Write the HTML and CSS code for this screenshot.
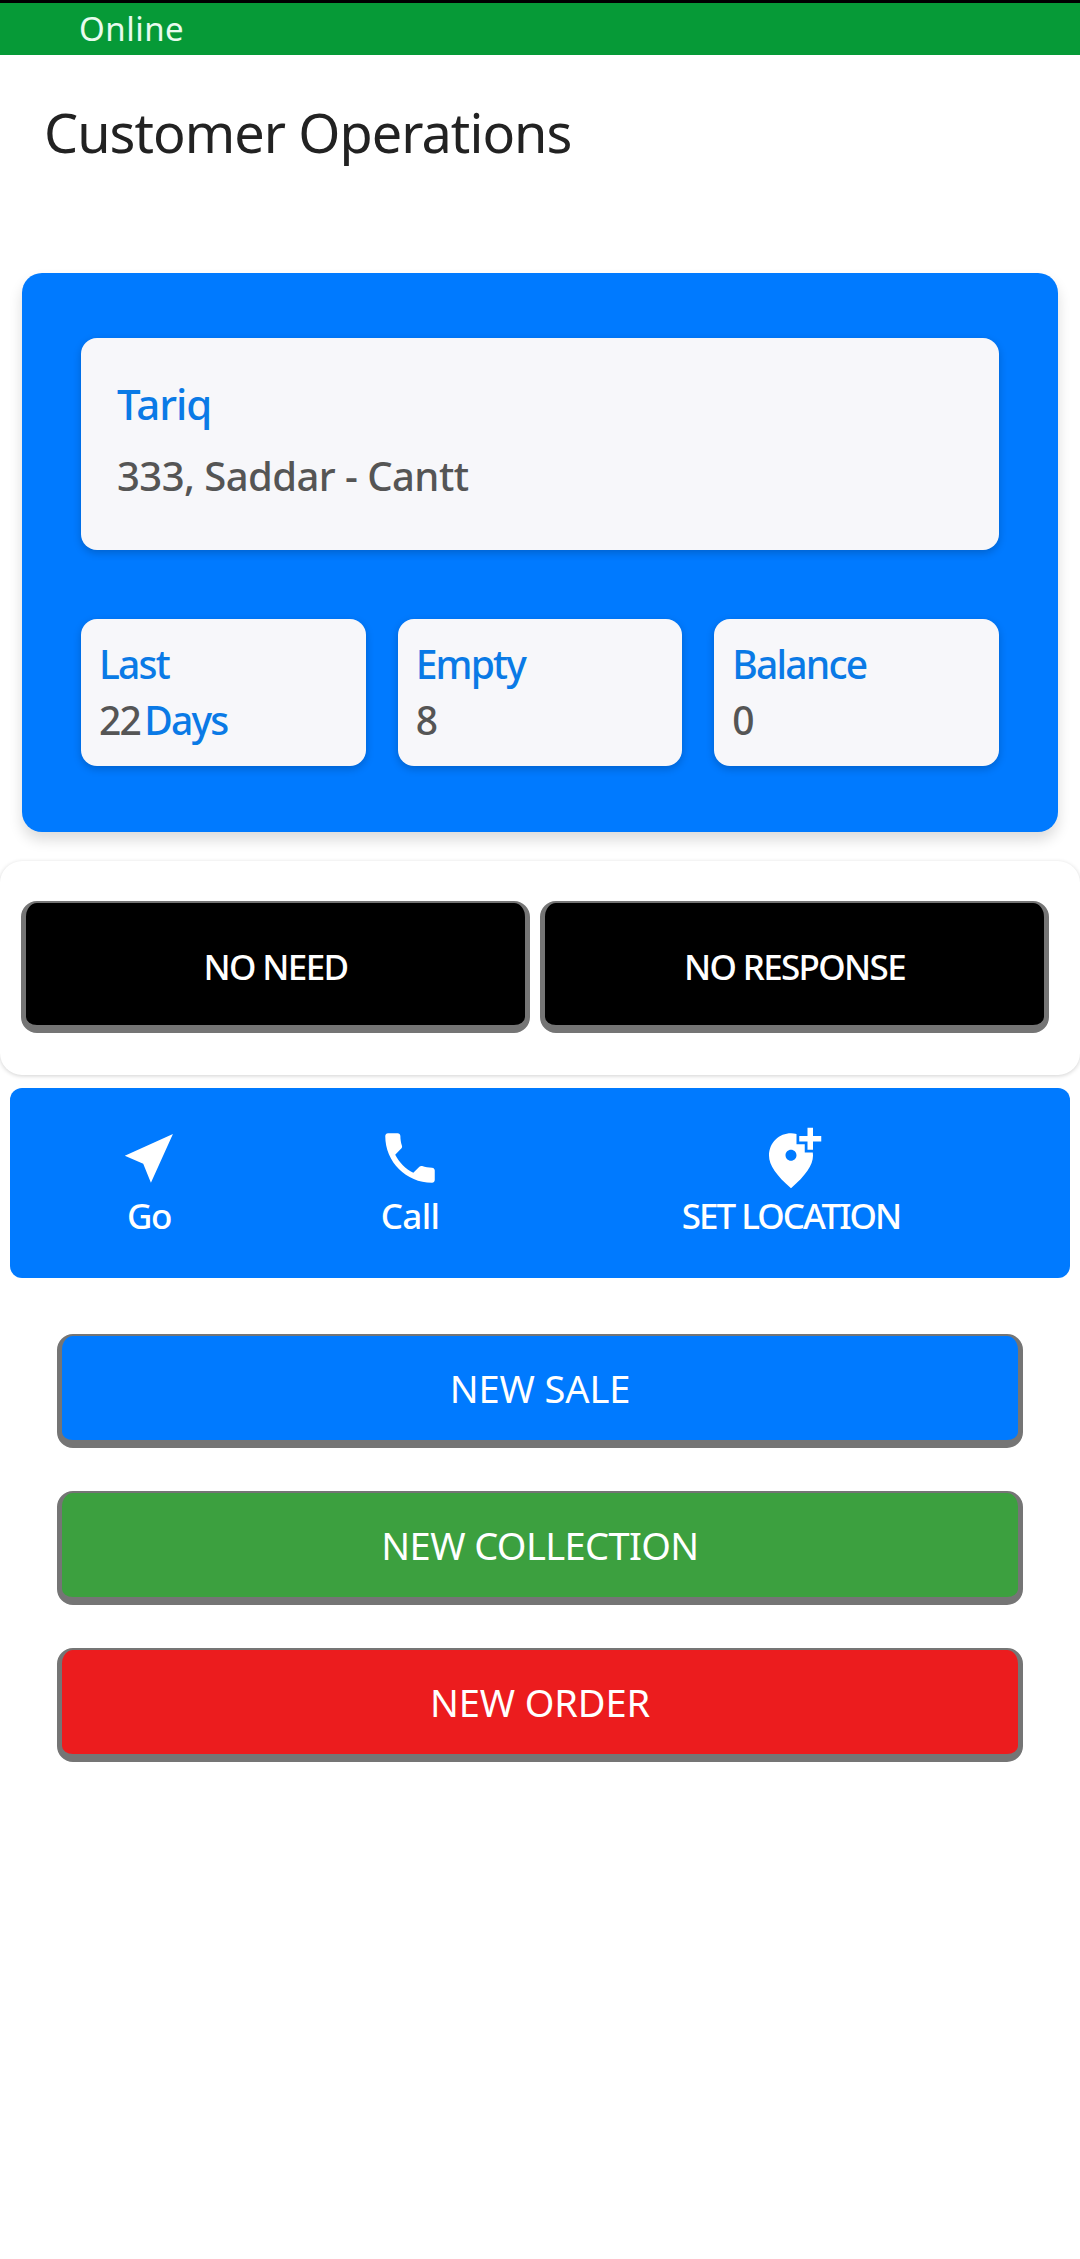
FILE: index.html
```html
<!DOCTYPE html>
<html lang="en">
<head>
<meta charset="utf-8">
<title>Customer Operations</title>
<link rel="stylesheet" href="styles.css">
</head>
<body>
<div class="status">Online</div>
<h1 class="title">Customer Operations</h1>
<section class="card">
  <div class="info">
    <div class="name">Tariq</div>
    <div class="addr">333, Saddar - Cantt</div>
  </div>
  <div class="stats">
    <div class="stat"><div class="lab">Last</div><div class="val">22 <span class="lab">Days</span></div></div>
    <div class="stat"><div class="lab">Empty</div><div class="val">8</div></div>
    <div class="stat"><div class="lab">Balance</div><div class="val">0</div></div>
  </div>
</section>
<section class="panel">
  <button class="dark">NO NEED</button>
  <button class="dark">NO RESPONSE</button>
</section>
<nav class="actions">
  <div class="act">
    <svg class="ico" viewBox="0 0 24 24"><path d="M20.7 3.3L3.2 11.2 9.9 14.1 12.7 21z"/></svg>
    <span>Go</span>
  </div>
  <div class="act">
    <svg class="ico" viewBox="0 0 24 24"><path d="M6.62 10.79c1.44 2.83 3.76 5.14 6.59 6.59l2.2-2.2c.27-.27.67-.36 1.02-.24 1.12.37 2.33.57 3.57.57.55 0 1 .45 1 1V20c0 .55-.45 1-1 1-9.39 0-17-7.61-17-17 0-.55.45-1 1-1h3.5c.55 0 1 .45 1 1 0 1.25.2 2.45.57 3.57.11.35.03.74-.25 1.02l-2.2 2.2z"/></svg>
    <span class="wordy">Call</span>
  </div>
  <div class="act">
    <svg class="ico" viewBox="0 0 24 24"><path d="M20 1v3h3v2h-3v3h-2V6h-3V4h3V1h2zm-8 12c1.1 0 2-.9 2-2 0-1.1-.9-2-2-2s-2 .9-2 2c0 1.1.9 2 2 2zm2-9.75V7h3v3h2.92c.05.39.08.79.08 1.2 0 3.32-2.67 7.25-8 11.8-5.33-4.55-8-8.48-8-11.8C4 6.22 7.8 3 12 3c.68 0 1.35.08 2 .25z"/></svg>
    <span class="caps">SET LOCATION</span>
  </div>
</nav>
<section class="big">
  <button class="wide blue">NEW SALE</button>
  <button class="wide green tight">NEW COLLECTION</button>
  <button class="wide red">NEW ORDER</button>
</section>
</body>
</html>
```
FILE: styles.css
```css
* { box-sizing: border-box; }
html, body { margin: 0; padding: 0; }
body { width: 1080px; height: 2259px; background: #fff; font-family: "Noto Sans", "Open Sans", sans-serif; overflow: hidden; }
button { font-family: inherit; display: block; margin: 0; }

.status { height: 55px; border-top: 3px solid #000; background: #069a37; color: #e8fbee; padding-left: 79px; font-size: 33px; line-height: 52px; letter-spacing: .5px; }
.title { margin: 0; height: 218px; padding: 39px 0 0 44px; font-size: 54px; line-height: 76px; font-weight: 400; color: #222; letter-spacing: -.95px; }

.card { margin: 0 22px; height: 559px; padding: 65px 59px 0; background: #007aff; border-radius: 20px; box-shadow: 0 8px 14px rgba(0,0,0,.14); }
.info { height: 212px; padding: 41px 36px 0; background: #f7f7fa; border-radius: 16px; box-shadow: 0 3px 8px rgba(0,0,0,.2); }
.name { font-size: 42px; line-height: 50px; font-weight: 500; color: #0a7ae6; letter-spacing: -1px; }
.addr { margin-top: 22px; font-size: 40px; line-height: 50px; font-weight: 500; color: #555; letter-spacing: -.55px; }
.stats { display: grid; grid-template-columns: repeat(3, 1fr); gap: 32px; margin-top: 69px; }
.stat { height: 147px; padding: 20px 18px; background: #f7f7fa; border-radius: 16px; box-shadow: 0 3px 8px rgba(0,0,0,.2); }
.lab { font-size: 39px; line-height: 50px; font-weight: 500; color: #0a7ae6; letter-spacing: -1.8px; }
.val { margin-top: 6px; font-size: 39px; line-height: 50px; font-weight: 500; color: #555; letter-spacing: -1.8px; word-spacing: -4px; }

.panel { display: flex; gap: 10px; margin-top: 29px; height: 214px; padding: 40px 31px 0 21px; background: #fff; border-radius: 22px; box-shadow: 0 1px 4px rgba(0,0,0,.18); }
.dark { flex: 1; height: 132px; background: #000; color: #fff; font-size: 35px; font-weight: 500; letter-spacing: -1.65px; border: solid #757575; border-width: 2px 5px 8px; border-radius: 16px; padding: 4px 0 0; }

.actions { display: grid; grid-template-columns: 278px 244px 518px; margin: 13px 10px 0; height: 190px; padding-top: 37px; background: #007aff; border-radius: 12px; }
.act { display: flex; flex-direction: column; align-items: center; color: #fff; font-size: 35px; line-height: 44px; font-weight: 500; letter-spacing: -1.3px; }
.act span { margin-top: 3px; }
.act .wordy { letter-spacing: -.6px; }
.act .caps { letter-spacing: -2px; }
.ico { width: 66px; height: 66px; fill: #fff; }

.big { display: flex; flex-direction: column; gap: 43px; margin: 56px 57px 0; }
.wide { width: 100%; height: 114px; color: #fff; font-size: 38px; font-weight: 400; letter-spacing: -.1px; border: solid #757575; border-width: 2px 5px 8px; border-radius: 16px; padding: 0; }
.tight { letter-spacing: -.6px; }
.blue { background: #007aff; }
.green { background: #3ca03f; }
.red { background: #ec1c1e; }
```
